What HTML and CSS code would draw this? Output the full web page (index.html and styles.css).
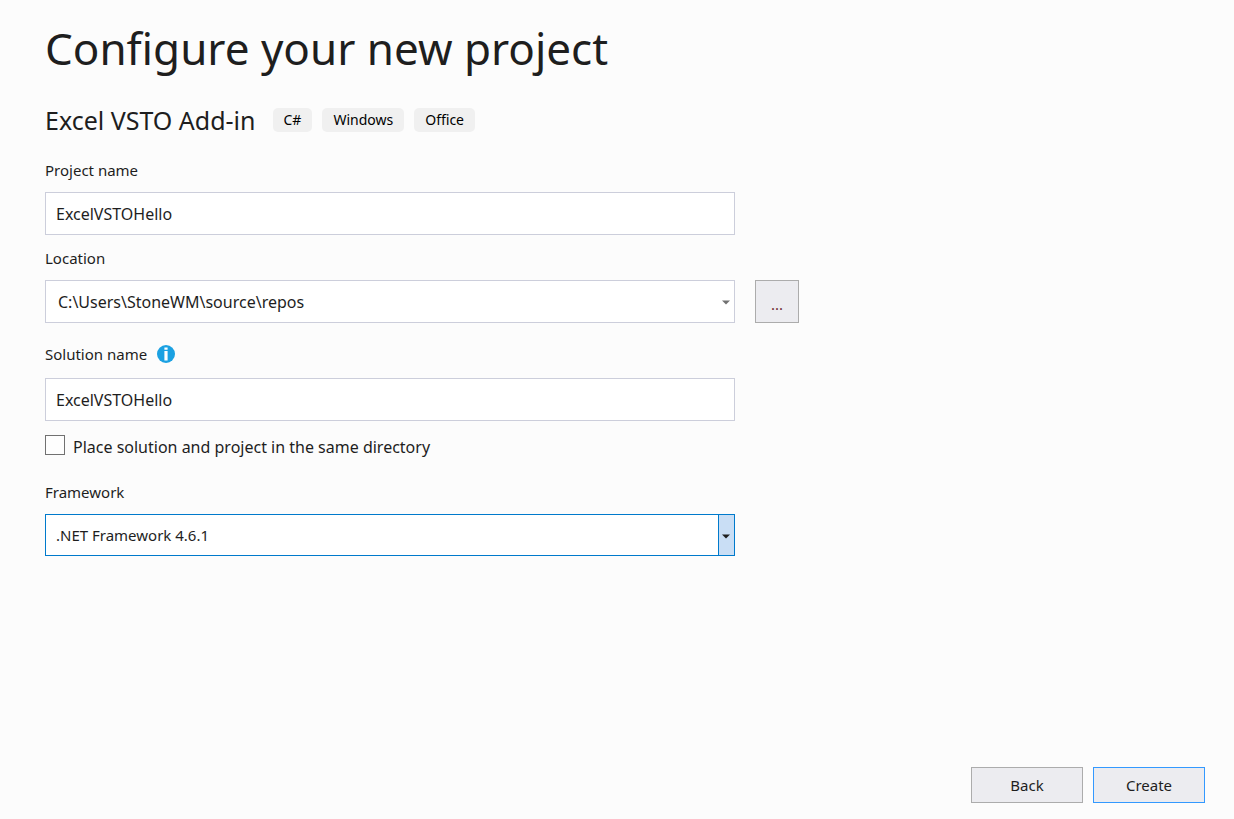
FILE: index.html
```html
<!DOCTYPE html>
<html lang="en">
<head>
  <meta charset="UTF-8">
  <meta name="viewport" content="width=device-width, initial-scale=1">
  <title>Configure your new project</title>
  <link rel="stylesheet" href="styles.css">
</head>
<body>
  <form class="page">
    <h1 class="title">Configure your new project</h1>

    <div class="template">
      <h2 class="template-name">Excel VSTO Add-in</h2>
      <ul class="tags">
        <li class="tag">C#</li>
        <li class="tag">Windows</li>
        <li class="tag">Office</li>
      </ul>
    </div>

    <div class="fields">
      <div class="field">
        <label class="label" for="project">Project name</label>
        <input class="box" type="text" id="project" value="ExcelVSTOHello">
      </div>

      <div class="field">
        <label class="label" for="location">Location</label>
        <div class="combo">
          <select class="box box-path" id="location">
            <option>C:\Users\StoneWM\source\repos</option>
          </select>
          <span class="arrow"><svg width="8" height="5" viewBox="0 0 8 5"><path d="M0 0.5h8L4 4.5z" fill="currentColor"/></svg></span>
        </div>
        <button class="button browse" type="button">...</button>
      </div>

      <div class="field field-wide">
        <div class="label-row">
          <label class="label" for="solution">Solution name</label>
          <svg class="info" width="18" height="18" viewBox="0 0 18 18">
            <circle cx="9" cy="9" r="9" fill="#1ba1e2"/>
            <path d="M7.4 2.6h3.2v2.2H7.4zM7.4 6h3.2v9.4H7.4z" fill="#fff"/>
          </svg>
        </div>
        <input class="box" type="text" id="solution" value="ExcelVSTOHello">
      </div>

      <div class="check-row">
        <input class="check" type="checkbox" id="same-dir">
        <label class="check-label" for="same-dir">Place solution and project in the same directory</label>
      </div>

      <div class="field">
        <label class="label" for="framework">Framework</label>
        <div class="combo combo-active">
          <select class="box" id="framework">
            <option>.NET Framework 4.6.1</option>
          </select>
          <span class="arrow"><svg width="8" height="5" viewBox="0 0 8 5"><path d="M0 0.5h8L4 4.5z" fill="currentColor"/></svg></span>
        </div>
      </div>
    </div>

    <div class="actions">
      <button class="button" type="button">Back</button>
      <button class="button button-default" type="submit">Create</button>
    </div>
  </form>
</body>
</html>
```

FILE: styles.css
```css
* { box-sizing: border-box; }
body {
  margin: 0;
  background: #fcfcfc;
  color: #1e1e1e;
  font: 15px/22px "Noto Sans", "Open Sans", sans-serif;
}
.page {
  display: flex;
  flex-direction: column;
  min-height: 100vh;
  padding: 18px 29px 16px 45px;
}

.title { margin: 0; font-size: 44px; line-height: 60px; font-weight: 400; }

.template { display: flex; align-items: center; flex-wrap: wrap; gap: 17px; margin-top: 26px; }
.template-name { margin: 0; font-size: 25px; line-height: 32px; font-weight: 400; }
.tags { display: flex; gap: 10px; margin: 0; padding: 0; list-style: none; }
.tag {
  padding: 0 11px;
  background: #f0f0f0;
  color: #000;
  border-radius: 5px;
  font-size: 14px;
  line-height: 24px;
}

.fields { display: flex; flex-direction: column; gap: 12px; margin-top: 23px; }
.field {
  display: grid;
  grid-template-columns: minmax(0, 690px) 44px;
  gap: 11px 20px;
}
.field > .label, .label-row { grid-column: 1 / -1; }
.field-wide { margin-top: 8px; row-gap: 13px; }
.label-row { display: flex; align-items: center; gap: 10px; }

.box {
  width: 100%;
  height: 43px;
  padding: 0 10px;
  border: 1px solid #cccedb;
  border-radius: 0;
  background: #fff;
  color: inherit;
  font: inherit;
  font-size: 16px;
  outline: none;
  appearance: none;
}
.box-path { padding-left: 12px; }

/* the arrow shares the grid cell of the select */
.combo { display: grid; }
.combo .box, .arrow { grid-area: 1 / 1; }
.arrow {
  display: flex;
  align-items: center;
  justify-content: center;
  justify-self: end;
  width: 17px;
  padding: 2px 2px 0 0;
  color: #717171;
  pointer-events: none;
}
.combo-active .box { height: 42px; border-color: #007acc; font-size: 15px; }
.combo-active .arrow { border: 1px solid #007acc; background: #c9def5; color: #1e1e1e; }

.check-row { display: flex; align-items: flex-start; gap: 8px; margin-top: 2px; }
.check {
  width: 20px;
  height: 20px;
  margin: 0;
  border: 1px solid #717171;
  background: #fefefe;
  appearance: none;
}
.check-label { font-size: 16px; line-height: 24px; }
.check:checked { background: #007acc; box-shadow: inset 0 0 0 3px #fefefe; }
.check-row + .field { margin-top: 10px; }

.button {
  width: 112px;
  height: 36px;
  padding: 0;
  border: 1px solid #acacac;
  background: #ececf0;
  color: inherit;
  font: inherit;
}
.button-default { border-color: #3399ff; }
.browse { width: 44px; height: 43px; padding-top: 4px; color: #712f35; }

.actions { display: flex; justify-content: flex-end; gap: 10px; margin-top: auto; }
```
